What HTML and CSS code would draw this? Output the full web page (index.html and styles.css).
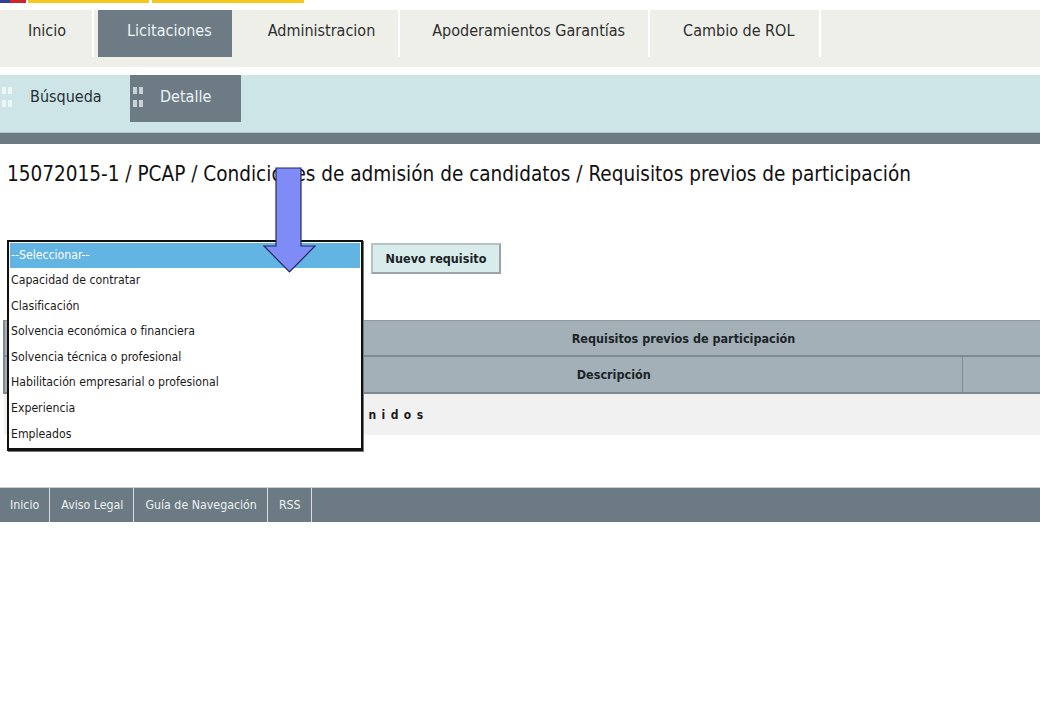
FILE: index.html
```html
<!DOCTYPE html>
<html lang="es">
<head>
<meta charset="utf-8">
<title>Requisitos previos de participación</title>
<link rel="stylesheet" href="styles.css">
</head>
<body>
<div class="flagstrip">
  <span class="seg seg-blue"></span><span class="seg seg-red"></span><span class="seg seg-gap"></span><span class="seg seg-yellow1"></span><span class="seg seg-gap2"></span><span class="seg seg-yellow2"></span>
</div>

<nav class="mainnav">
  <a class="navitem first">Inicio</a>
  <a class="navitem active">Licitaciones</a>
  <a class="navitem">Administracion</a>
  <a class="navitem">Apoderamientos Garantías</a>
  <a class="navitem last">Cambio de ROL</a>
</nav>

<nav class="subnav">
  <a class="subitem"><span class="grip"><i></i><i></i><i></i><i></i></span>Búsqueda</a>
  <a class="subitem active"><span class="grip"><i></i><i></i><i></i><i></i></span>Detalle</a>
</nav>
<div class="darkbar"></div>

<main class="content">
  <h1 class="title">15072015-1 / PCAP / Condiciones de admisión de candidatos / Requisitos previos de participación</h1>

  <div class="formrow">
    <div class="selectwrap">
      <ul class="listbox">
        <li class="selected">--Seleccionar--</li>
        <li>Capacidad de contratar</li>
        <li>Clasificación</li>
        <li>Solvencia económica o financiera</li>
        <li>Solvencia técnica o profesional</li>
        <li>Habilitación empresarial o profesional</li>
        <li>Experiencia</li>
        <li>Empleados</li>
      </ul>
    </div>
    <button class="btn">Nuevo requisito</button>
  </div>

  <div class="gridwrap">
    <table class="grid">
      <colgroup>
        <col class="c-sel">
        <col class="c-desc">
        <col class="c-acts">
      </colgroup>
      <tr class="head1"><th colspan="3">Requisitos previos de participación</th></tr>
      <tr class="head2"><th class="sel"></th><th class="desc">Descripción</th><th class="acts"></th></tr>
      <tr class="empty"><td colspan="3">No hay requisitos definidos</td></tr>
    </table>
  </div>
</main>

<footer class="footer">
  <a class="fitem">Inicio</a>
  <a class="fitem">Aviso Legal</a>
  <a class="fitem">Guía de Navegación</a>
  <a class="fitem">RSS</a>
</footer>

<svg class="arrow" width="56" height="108" viewBox="0 0 56 108" xmlns="http://www.w3.org/2000/svg">
  <path d="M14 1 H39 V79 H53 L27.5 105 L2 79 H14 Z" fill="#7f8cf8" stroke="#23285a" stroke-width="1.2" stroke-linejoin="miter"/>
</svg>
</body>
</html>
```

FILE: styles.css
```css
html, body {
  margin: 0;
  padding: 0;
  background: #ffffff;
  overflow-x: hidden;
}
body {
  position: relative;
  font-family: "DejaVu Sans Condensed", "DejaVu Sans", Verdana, sans-serif;
  font-stretch: condensed;
  color: #222;
  width: 1040px;
  min-height: 720px;
}

/* top colour strip */
.flagstrip {
  display: flex;
  height: 3px;
}
.seg { display: block; height: 3px; }
.seg-blue { width: 10px; background: #2f3f9a; }
.seg-red { width: 16px; background: #d0242c; }
.seg-gap { width: 2px; background: #fff; }
.seg-yellow1 { width: 121px; background: #f4c81c; }
.seg-gap2 { width: 3px; background: #fff; }
.seg-yellow2 { width: 152px; background: #f4c81c; }

/* main navigation */
.mainnav {
  display: flex;
  margin-top: 7px;
  height: 57px;
  background: #efefea;
}
.navitem {
  display: block;
  height: 47px;
  line-height: 42px;
  padding: 0 23px 0 32px;
  font-size: 16px;
  color: #2e2e2e;
  border-right: 2px solid #ffffff;
  white-space: nowrap;
}
.navitem.first { padding-left: 28px; padding-right: 26px; }
.navitem.last { padding-left: 33px; padding-right: 25px; }
.navitem.active {
  background: #6c7b84;
  color: #eef3f6;
  margin-left: 4px;
  margin-right: 4px;
  border-right: none;
  padding-left: 29px;
  padding-right: 20px;
}

/* sub navigation */
.subnav {
  display: flex;
  margin-top: 8px;
  height: 57px;
  background: #cde5e6;
}
.subitem {
  display: flex;
  align-items: center;
  height: 43px;
  padding-bottom: 4px;
  font-size: 16px;
  color: #263036;
  white-space: nowrap;
}
.subitem:first-child { padding-left: 2px; width: 128px; }
.subitem .grip { margin-right: 18px; }
.subitem.active {
  background: #6c7b84;
  color: #eef3f6;
  padding: 0 30px 4px 3px;
}
.subitem.active .grip { margin-right: 17px; }
.grip {
  display: grid;
  grid-template-columns: 4px 4px;
  grid-template-rows: 7px 7px;
  column-gap: 2px;
  row-gap: 6px;
}
.grip i { display: block; background: #eef6f6; }
.subitem.active .grip i { background: #c9d2d6; }

.darkbar {
  height: 11px;
  background: #6b7a83;
  border-top: 1px solid #b6c4c8;
}

/* content */
.title {
  margin: 15px 0 0 7px;
  font-size: 20.55px;
  line-height: 30px;
  font-weight: normal;
  color: #111111;
  white-space: nowrap;
}

.formrow {
  display: flex;
  align-items: flex-start;
  margin-top: 54px;
  padding-left: 7px;
}
.selectwrap {
  position: relative;
  width: 356px;
  height: 30px;
}
.listbox {
  position: absolute;
  z-index: 5;
  left: 0;
  top: -3px;
  width: 356px;
  height: 211px;
  box-sizing: border-box;
  margin: 0;
  padding: 1px;
  list-style: none;
  background: #ffffff;
  border: 2px solid #111;
  border-bottom-width: 3px;
  box-shadow: 1px 1px 0 #777;
}
.listbox li {
  height: 25.6px;
  line-height: 25px;
  padding-left: 1px;
  font-size: 12.2px;
  color: #1a1a1a;
  white-space: nowrap;
}
.listbox li.selected {
  height: 25px;
  background: #62b4e2;
  color: #ffffff;
}
.btn {
  margin-left: 8px;
  width: 130px;
  height: 31px;
  padding: 0;
  font-family: inherit;
  font-stretch: condensed;
  font-weight: bold;
  font-size: 12.5px;
  color: #1b2226;
  background: #d9ecec;
  border: 2px solid #9aa4a8;
  border-top-color: #b8c0c3;
  border-left-color: #b8c0c3;
}

/* table (wider than the window, clipped on the right) */
.gridwrap {
  margin-top: 46px;
  padding-left: 3px;
  overflow: hidden;
}
.grid {
  width: 1358px;
  border-collapse: collapse;
  table-layout: fixed;
}
.c-sel { width: 262px; }
.c-desc { width: 696px; }
.c-acts { width: 400px; }
.grid th {
  padding: 0;
  font-weight: bold;
  font-size: 12.5px;
  color: #1c2428;
  background: #a3b0b7;
  text-align: center;
}
.head1 th {
  height: 34px;
  border-top: 1px solid #8c9aa2;
  border-bottom: 2px solid #7c8a92;
  border-left: 2px solid #7c8a92;
}
.head2 th {
  height: 35px;
  border-bottom: 2px solid #7c8a92;
}
.head2 th.sel { border-left: 2px solid #7c8a92; }
.head2 th.desc { border-right: 1px solid #7c8a92; }
.empty td {
  height: 41px;
  padding: 0 0 0 112px;
  background: #f1f1f1;
  font-weight: bold;
  font-size: 12px;
  letter-spacing: 5.4px;
  color: #1a1a1a;
}

/* footer */
.footer {
  display: flex;
  margin-top: 52px;
  height: 34px;
  background: #6b7a83;
  border-top: 1px solid #c9d1d4;
}
.fitem {
  display: block;
  line-height: 34px;
  font-size: 12.3px;
  color: #edf1f3;
  padding: 0 10px 0 11px;
  border-right: 1px solid #d7dde0;
  white-space: nowrap;
}
.fitem:first-child { padding-left: 10px; }

/* annotation arrow over the page */
.arrow {
  position: absolute;
  left: 262px;
  top: 167px;
  z-index: 10;
}
```
